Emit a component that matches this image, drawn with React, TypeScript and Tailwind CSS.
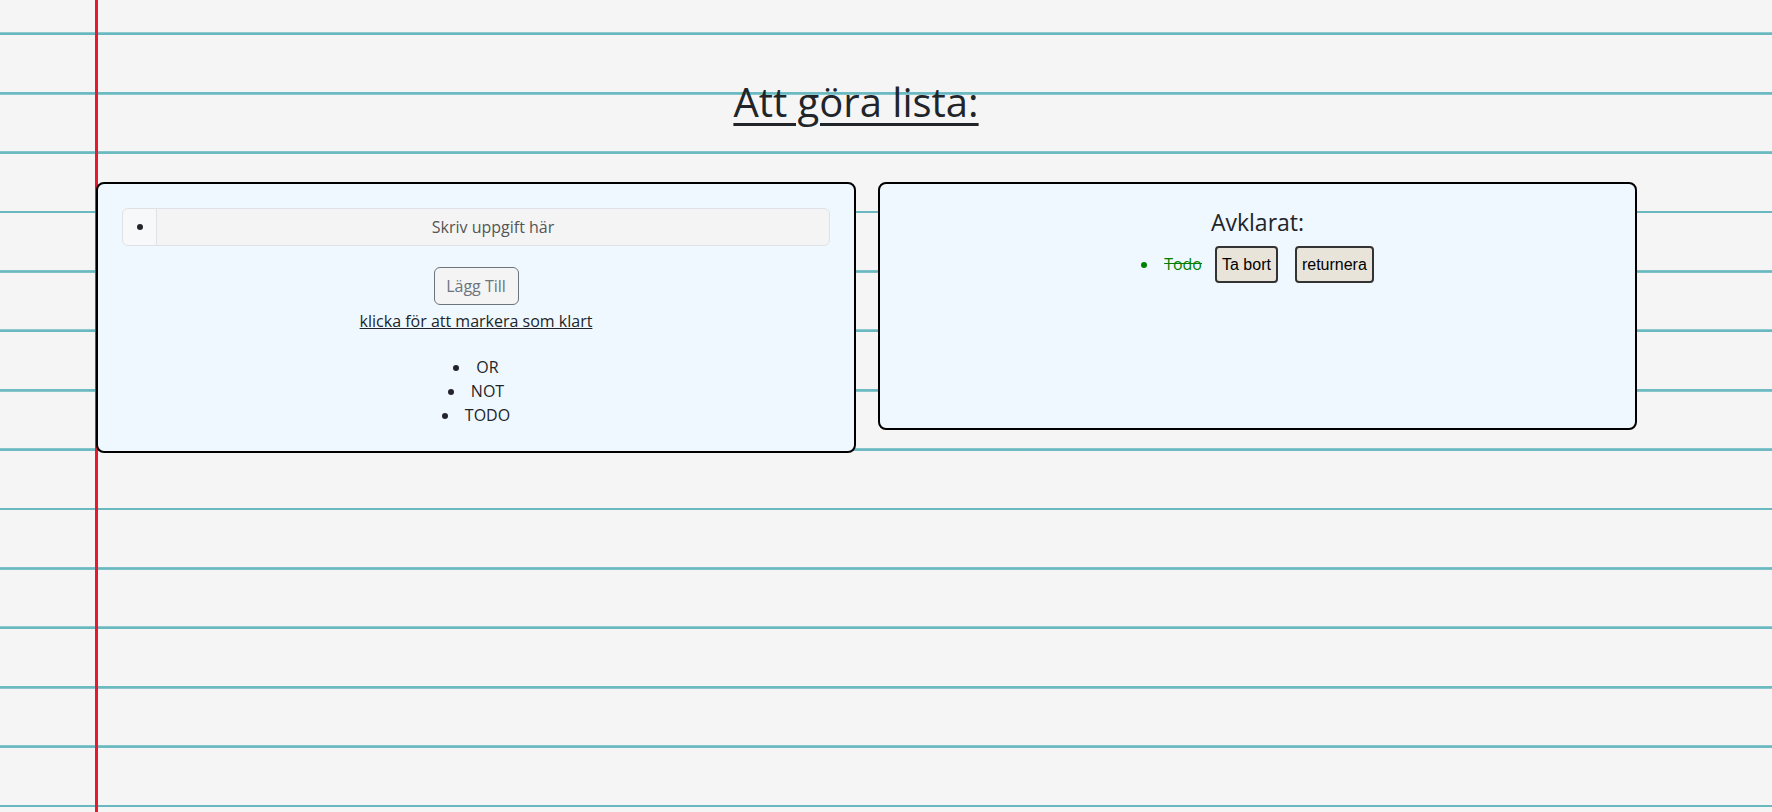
import React from 'react'

const bodyFont = "font-['Open_Sans','Lato',sans-serif]"
const btnFont = "font-['Liberation_Sans',Arial,sans-serif]"

function TodoCard() {
  return (
    <div className="relative z-10 w-[760px] rounded-[8px] border-2 border-black bg-[#f0f8ff] p-6 text-center">
      <div className="flex h-[38px] w-full">
        <span className="flex w-[35px] items-center justify-center rounded-l-[6px] border border-[#dee2e6] bg-[#f6f8fa]">
          <span className="h-[6px] w-[6px] rounded-full bg-[#212529]" />
        </span>
        <input
          placeholder="Skriv uppgift här"
          className="-ml-px flex-1 rounded-r-[6px] border border-[#dee2e6] bg-[#f4f4f4] text-center text-[16px] text-[#333] placeholder:text-[#555] outline-none"
        />
      </div>
      <button className="mt-[21px] h-[38px] w-[85px] rounded-[6px] border border-[#6c757d] bg-[#f4f4f4] text-[16px] text-[#6c757d]">
        Lägg Till
      </button>
      <div className="mt-[4px] leading-6">
        <a href="#" className="text-[#212529] underline">
          klicka för att markera som klart
        </a>
      </div>
      <ul className="mt-[22px] list-inside list-disc leading-6 text-[#212529]">
        <li>OR</li>
        <li>NOT</li>
        <li>TODO</li>
      </ul>
    </div>
  )
}

function DoneCard() {
  return (
    <div className="relative z-10 h-[248px] w-[759px] rounded-[8px] border-2 border-black bg-[#f0f8ff] pt-[22px] text-center">
      <h2 className="text-[23px] leading-8 text-[#212529]">Avklarat:</h2>
      <ul className="mt-[8px] list-inside list-disc">
        <li className="text-[#008000]">
          <span className="line-through">Todo</span>
          <button className={`${btnFont} ml-[13px] h-[37px] rounded-[4px] border-2 border-[#333] bg-[#e9e4da] px-[5px] text-[16px] text-black`}>
            Ta bort
          </button>
          <button className={`${btnFont} ml-[17px] h-[37px] rounded-[4px] border-2 border-[#333] bg-[#e9e4da] px-[5px] text-[16px] text-black`}>
            returnera
          </button>
        </li>
      </ul>
    </div>
  )
}

export default function App() {
  return (
    <div
      className={`${bodyFont} relative min-h-screen w-full overflow-hidden bg-[#f5f5f5] bg-[image:repeating-linear-gradient(180deg,transparent_0px,transparent_32.5px,#8fcad0_32.5px,#6ab9c1_33.2px,#6ab9c1_34.6px,#8fcad0_35.2px,transparent_35.2px,transparent_59.4px)] text-[16px] text-[#212529]`}
    >
      <div className="absolute top-0 bottom-0 left-[95px] w-[3px] bg-[#e8192c]" />
      <div className="ml-[96px] w-[1520px] pt-[78px] text-center">
        <h1 className="text-[40px] leading-[48px] underline decoration-[3px] underline-offset-[6px]">
          Att göra lista:
        </h1>
      </div>
      <div className="mt-[56px] ml-[96px] flex items-start gap-[22px]">
        <TodoCard />
        <DoneCard />
      </div>
    </div>
  )
}
